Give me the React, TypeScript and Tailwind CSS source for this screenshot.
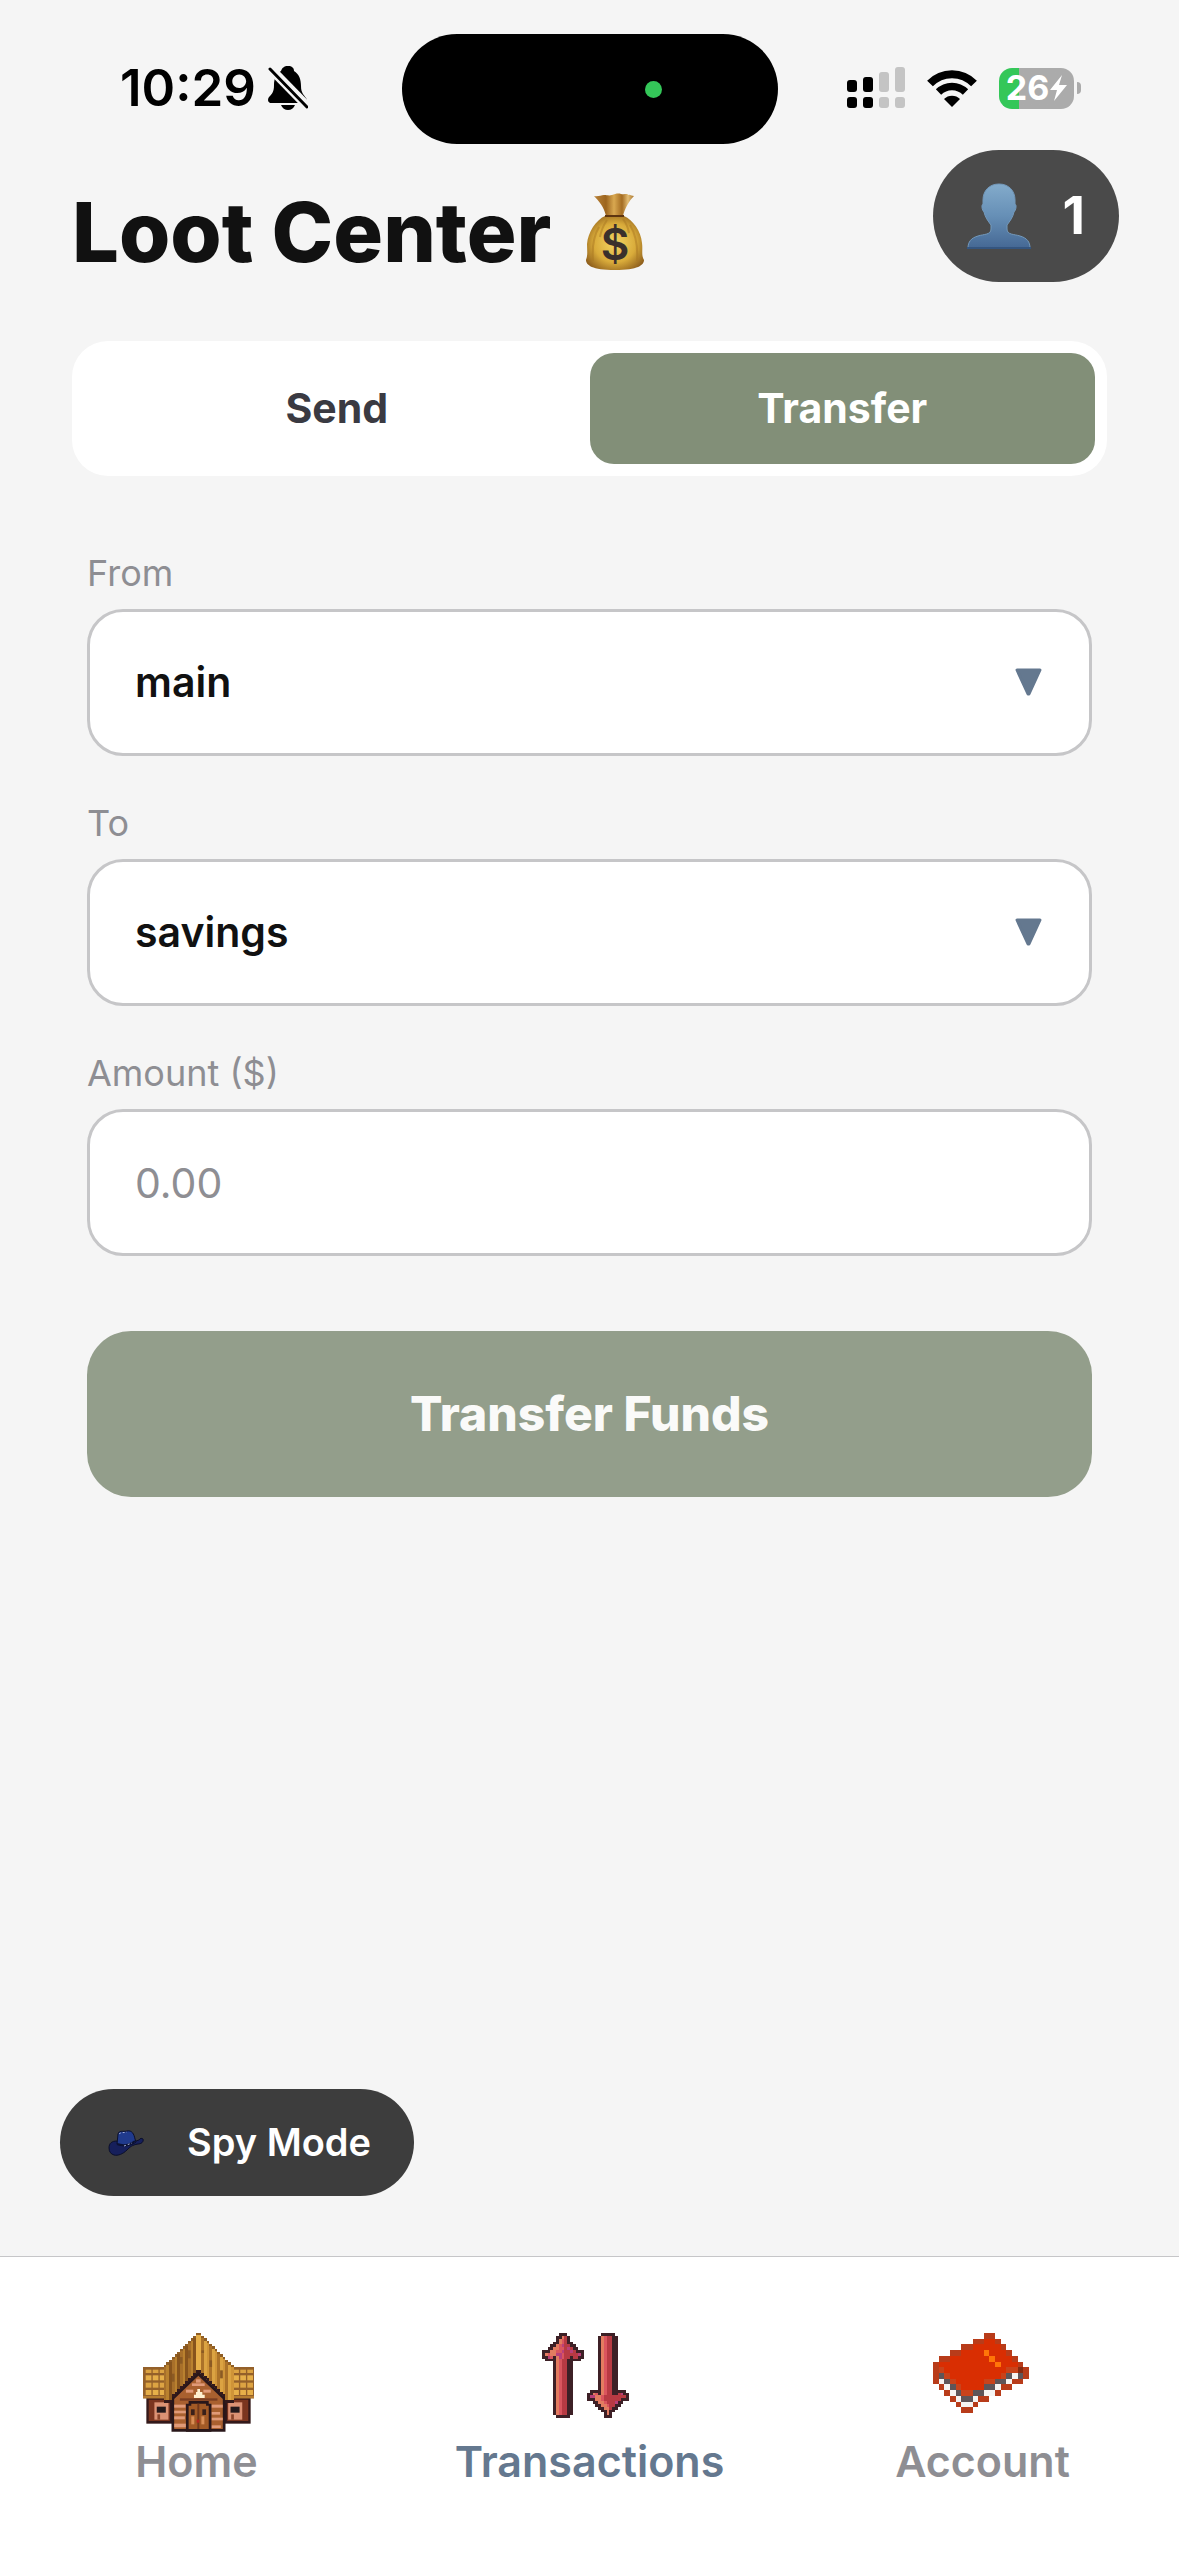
import { useState } from "react";

const BOOK = {
  colors: { d: "#b83c1a", R: "#d92e02", m: "#c9431b", o: "#ff7508", g: "#5f5558", w: "#f6f4f2", k: "#872a10" },
  rows: [
    ".........dd......",
    ".......ddRRd.....",
    ".....ddRRRRRd....",
    "...ddRRRRoRRRd...",
    ".ddRRRRRRRoRRRd..",
    "dRRRRRRRRRRoRRRd.",
    "dmRRRRRRRRRRRmmkd",
    "dgmRRRRRRRRRmgwgd",
    "dwgmRRRRRmmggwdd.",
    ".dwgmRRRRggwdd...",
    "..dwgmmggwwd.....",
    "...dwggwdd.......",
    "....dwwd.........",
    ".....dd..........",
  ],
};

const SHAFT_UP = Array(19).fill("....kocrrkk....");
const SHAFT_DOWN = Array(18).fill("....kocrrkk....");

const ARROW_COLORS = { k: "#3d2026", o: "#e37c60", c: "#da555e", r: "#b83a43", p: "#b9407a" };

const ARROW_UP = {
  colors: ARROW_COLORS,
  rows: [
    "......kkk......",
    ".....kkork.....",
    ".....kocrk.....",
    "....kkocrkk....",
    "...kkocprrkk...",
    "..kkooccrprkk..",
    "kkkooccprrprkkk",
    "kocooppcrrrrrpk",
    "kkpckopcrrkrrkk",
    ".kkkkocrrkkkkk.",
    ...SHAFT_UP,
    ".....kkkkk.....",
  ],
};

const ARROW_DOWN = {
  colors: ARROW_COLORS,
  rows: [
    ".....kkkkk.....",
    ...SHAFT_DOWN,
    "....kocrrkk....",
    ".kkkkocrrkkkkk.",
    "kkockocrrkkrpkk",
    "kppoocrrrrrrrrk",
    "kkkoocrrrrrrkkk",
    "..kkoocrrrpkk..",
    "...kkoocrrkk...",
    "....kkoorkk....",
    ".....kkokk.....",
    "......kok......",
    "......kkk......",
  ],
};

function PixelArt({ art, className }: { art: { colors: any; rows: string[] }; className: string }) {
  return (
    <svg
      className={className}
      viewBox={`0 0 ${art.rows[0].length} ${art.rows.length}`}
      preserveAspectRatio="none"
      shapeRendering="crispEdges"
      aria-hidden="true"
    >
      {art.rows.map((row, y) =>
        row.split("").map((c, x) =>
          c === "." ? null : <rect key={`${x}-${y}`} x={x} y={y} width="1" height="1" fill={art.colors[c]} />
        )
      )}
    </svg>
  );
}

function HouseIcon() {
  // stepped roof, one strip per column of pixels
  const strips = Array.from({ length: 26 }, (_, i) => {
    const x = 132 + i * 8;
    const dist = Math.abs(x + 4 - 236);
    const top = dist < 12 ? 68 : 68 + Math.floor((dist - 4) / 8) * 8;
    const bottom = Math.min(268, 180 + Math.floor((dist * 1.05) / 8) * 8);
    let fill = x < 228 ? ["#a8702a", "#b9812f", "#87541d"][i % 3] : ["#dba342", "#cf9438", "#ab7229"][i % 3];
    if (dist < 10) fill = "#e6ae48";
    return { x, top, bottom, fill };
  });

  return (
    <svg className="h-[99px] w-[111px]" viewBox="70 68 331 297" preserveAspectRatio="none" aria-hidden="true">
      {/* side wings */}
      {[80, 314].map((x) => (
        <g key={x}>
          <rect x={x} y="260" width="77" height="80" fill="#33191a" />
          <rect x={x + 7} y="268" width="63" height="64" fill="#7b351f" />
          <rect x={x + (x < 200 ? 24 : 10)} y="276" width="42" height="52" fill="#dc9274" />
          <rect x={x + (x < 200 ? 31 : 17)} y="289" width="27" height="18" fill="#25191b" />
          <rect x={x + (x < 200 ? 33 : 19)} y="312" width="8" height="16" fill="#8b452a" />
        </g>
      ))}
      {[70, 331].map((x) => (
        <g key={x}>
          <rect x={x} y="170" width="70" height="94" fill="#94602a" />
          {[178, 195, 217, 239].map((y, r) =>
            [8, 29, 50].map((dx) => (
              <rect key={`${dx}-${y}`} x={x + dx} y={y} width="17" height={r === 0 ? 10 : 15} fill={r % 2 ? "#e6af49" : "#dca342"} />
            ))
          )}
          <rect x={x} y="257" width="70" height="7" fill="#b47b31" />
        </g>
      ))}
      {/* front */}
      <path d="M155 364V262L235 182L316 262V364Z" fill="#29171a" />
      <path d="M163 356V266L235 196L308 266V356Z" fill="#a9602f" />
      <g fill="#e09a78">
        <rect x="163" y="283" width="34" height="9" />
        <rect x="163" y="301" width="38" height="8" />
        <rect x="163" y="318" width="32" height="9" />
        <rect x="163" y="340" width="38" height="11" />
        <rect x="274" y="283" width="34" height="9" />
        <rect x="274" y="305" width="26" height="8" />
        <rect x="274" y="322" width="34" height="8" />
        <rect x="274" y="345" width="28" height="8" />
        <rect x="228" y="207" width="14" height="10" />
        <rect x="216" y="219" width="38" height="8" />
        <rect x="198" y="238" width="22" height="9" />
        <rect x="250" y="238" width="22" height="9" />
      </g>
      <rect x="180" y="264" width="112" height="7" fill="#7a3e22" />
      <path d="M232 236h8v9h7v8h7v10h-32v-10h6v-8h4z" fill="#fff0d0" />
      <path d="M198 364V280h8v-8h60v8h8v84z" fill="#29171a" />
      <path d="M206 356V286h8v-6h44v6h8v70z" fill="#a25a26" />
      <rect x="232" y="280" width="6" height="76" fill="#723a1c" />
      <rect x="213" y="297" width="11" height="17" fill="#39201a" />
      <rect x="247" y="297" width="11" height="17" fill="#39201a" />
      <rect x="214" y="318" width="9" height="24" fill="#d88d55" />
      <rect x="244" y="318" width="9" height="24" fill="#d88d55" />
      <rect x="230" y="328" width="8" height="9" fill="#b3261e" />
      {/* roof */}
      {strips.map((s) => (
        <g key={s.x} shapeRendering="crispEdges">
          <rect x={s.x} y={s.top} width="8" height={s.bottom - s.top + 9} fill="#33191a" />
          <rect x={s.x} y={s.top} width="8" height={s.bottom - s.top} fill={s.fill} />
          <rect x={s.x} y={s.top} width="8" height="7" fill="#8f5e26" />
        </g>
      ))}
      <g fill="#8a5a24">
        <rect x="180" y="140" width="8" height="20" />
        <rect x="156" y="190" width="8" height="24" />
        <rect x="204" y="120" width="8" height="24" />
        <rect x="244" y="120" width="8" height="8" />
        <rect x="268" y="150" width="8" height="20" />
        <rect x="300" y="180" width="8" height="24" />
      </g>
    </svg>
  );
}

function MoneyBag() {
  return (
    <svg className="h-[78px] w-[60px]" viewBox="0 0 60 78" aria-hidden="true">
      <defs>
        <radialGradient id="bag" cx="0.5" cy="0.5" r="0.6">
          <stop offset="0" stopColor="#f3d563" />
          <stop offset="0.6" stopColor="#d9ab3a" />
          <stop offset="1" stopColor="#8f5f1c" />
        </radialGradient>
        <linearGradient id="neck" x1="0" x2="1">
          <stop offset="0" stopColor="#b98238" />
          <stop offset="0.3" stopColor="#9c651f" />
          <stop offset="0.5" stopColor="#d9a850" />
          <stop offset="0.7" stopColor="#a46c22" />
          <stop offset="0.85" stopColor="#e3bd74" />
          <stop offset="1" stopColor="#a87530" />
        </linearGradient>
      </defs>
      <path d="M21 23C19 14 14 8 9 3c4 1 7-1 10-1s5 1 8 0 6-2 9-1 7-1 7 1c2-1 4 1 6 1-5 5-9 12-11 20z" fill="url(#neck)" />
      <path d="M20 23h19c9 4 17 15 18 27 1 7-1 12 2 17 0 5-6 10-29 10S1 72 1 67c2-5 1-10 1-16 1-12 9-24 18-28z" fill="url(#bag)" />
      <path d="M14 34C8 44 7 55 8 68M22 27c-4 6-6 11-7 17M45 32c6 10 8 22 7 36M38 26c3 4 5 8 6 14" fill="none" stroke="#a97722" strokeWidth="2" opacity="0.5" />
      <path d="M20 22h19v2H20z" fill="#5e3510" />
      <text x="30" y="67" textAnchor="middle" fill="#3a302c" className="font-['Inter',sans-serif] text-[44px] font-semibold">$</text>
    </svg>
  );
}

function PersonIcon() {
  return (
    <svg className="h-[66px] w-16" viewBox="0 0 64 66" aria-hidden="true">
      <defs>
        <linearGradient id="bust" x1="0" x2="0" y1="0" y2="1">
          <stop offset="0" stopColor="#83abcb" />
          <stop offset="0.5" stopColor="#668fb6" />
          <stop offset="1" stopColor="#456894" />
        </linearGradient>
      </defs>
      <path
        d="M32 1c10 0 16 7 16 16v4c2 1 1 6-1 8-1 5-4 9-7 13v4c0 6 7 5 13 7 7 2 10 6 10 12H1c0-6 3-10 10-12 6-2 13-1 13-7v-4c-3-4-6-8-7-13-2-2-3-7-1-8v-4C16 8 22 1 32 1z"
        fill="url(#bust)"
        stroke="#7399bb"
        strokeWidth="1"
      />
      <path d="M0 65h64" stroke="#34557f" strokeWidth="2" />
    </svg>
  );
}

function HatIcon() {
  return (
    <svg className="h-[26px] w-9" viewBox="0 0 36 26" aria-hidden="true">
      <path d="M1 18c0-5 3-7 8-7l3 4c6 1 12-1 16-4l3-1c1-2 3-2 4-1 1 3-2 5-5 5-6 1-8 3-11 6-4 4-9 6-13 5-3-1-5-3-5-7z" fill="#161f5b" stroke="#0b0f2a" strokeWidth="1" />
      <path d="M9 14l1-10c1-4 5-2 9-3 5-1 7 3 8 8l1 3c-5 4-13 5-19 2z" fill="#203a8c" stroke="#0b0f2a" strokeWidth="1" />
      <path d="M9 14c6 2 13 1 18-3" fill="none" stroke="#0d1233" strokeWidth="2" />
      <path d="M11 4c2-2 5-1 8-2M16 16l8-3" fill="none" stroke="#a9b5dc" strokeWidth="1" strokeDasharray="2 2" />
    </svg>
  );
}

function StatusBar() {
  return (
    <div className="grid h-[150px] grid-cols-[1fr_376px_1fr] items-start pt-[34px] text-black">
      <div className="flex h-[108px] items-center gap-3 pl-[120px]">
        <span className="text-[51px] leading-[60px] font-semibold">10:29</span>
        <svg className="h-[44px] w-10" viewBox="0 0 40 44" aria-hidden="true">
          <path d="M20 0c4 0 6 2 6 5 5 3 7 8 7 15 0 7 3 9 5 12 2 3 1 5-2 5H4c-4 0-5-3-3-6 3-3 5-5 5-12 0-6 2-11 7-14 1-3 3-5 7-5z" />
          <path d="M13 39h14c-1 3-4 5-7 5s-6-2-7-5z" />
          <path d="M0 0L40 41" stroke="#f5f5f5" strokeWidth="9" />
          <path d="M2 3L39 41" stroke="#000" strokeWidth="3" strokeLinecap="round" />
        </svg>
      </div>
      <div className="flex h-[110px] items-center justify-end rounded-full bg-black pr-[116px]">
        <span className="h-[17px] w-[17px] rounded-full bg-[#34c759]" />
      </div>
      <div className="flex h-[108px] items-center justify-end gap-[22px] pr-[98px]">
        <svg className="h-[42px] w-[58px]" viewBox="0 0 58 42" aria-hidden="true">
          <g fill="#000">
            <rect x="0" y="13" width="10" height="12" rx="3" />
            <rect x="16" y="10" width="10" height="15" rx="3" />
            <rect x="0" y="30" width="10" height="11" rx="3" />
            <rect x="16" y="30" width="10" height="11" rx="3" />
          </g>
          <g fill="#c4c4c4">
            <rect x="32" y="5" width="10" height="20" rx="3" />
            <rect x="48" y="0" width="10" height="25" rx="3" />
            <rect x="32" y="30" width="10" height="11" rx="3" />
            <rect x="48" y="30" width="10" height="11" rx="3" />
          </g>
        </svg>
        <svg className="h-[37px] w-[50px]" viewBox="0 0 50 37" aria-hidden="true">
          <path d="M3 13.500C15 1 35 1 47 13.500" fill="none" stroke="#000" strokeWidth="8" />
          <path d="M11.500 22C19 14.500 31 14.500 38.500 22" fill="none" stroke="#000" strokeWidth="7.500" />
          <path d="M25 37l-8-8c4-4.500 12-4.500 16 0z" />
        </svg>
        <div className="flex items-center gap-[3px]">
          <div className="flex h-[41px] w-[75px] items-center justify-center gap-px rounded-[13px] bg-linear-to-r from-[#34c759] from-27% to-[#ababab] to-27% text-white">
            <span className="text-[34px] leading-10 font-bold">26</span>
            <svg className="h-[26px] w-[17px]" viewBox="0 0 17 26" fill="currentColor" aria-hidden="true">
              <path d="M12 0L0 15h7L4 26l13-16H9z" />
            </svg>
          </div>
          <span className="h-3 w-1 rounded-r-full bg-[#ababab]" />
        </div>
      </div>
    </div>
  );
}

function AccountSelect({ id, label, value, onChange }: any) {
  return (
    <div>
      <label htmlFor={id} className="block text-[36px] leading-[42px] text-[#8e8e93]">
        {label}
      </label>
      <div className="relative mt-[15px]">
        <select
          id={id}
          value={value}
          onChange={(e) => onChange(e.target.value)}
          className="block h-[147px] w-full appearance-none rounded-[36px] border-3 border-[#c6c6c8] bg-white px-[45px] text-[41px] font-semibold text-[#111111]"
        >
          <option value="main">main</option>
          <option value="savings">savings</option>
        </select>
        <svg className="pointer-events-none absolute top-[59px] right-[50px] h-7 w-[27px]" viewBox="0 0 27 28" aria-hidden="true">
          <path d="M2 2h23L14 26h-1z" fill="#64788f" stroke="#64788f" strokeWidth="3" strokeLinejoin="round" />
        </svg>
      </div>
    </div>
  );
}

export default function App() {
  const [tab, setTab] = useState("transfer");
  const [from, setFrom] = useState("main");
  const [to, setTo] = useState("savings");
  const [amount, setAmount] = useState("");

  const tabClass = (name: string) =>
    tab === name ? "bg-[#828f78] text-white" : "text-[#3a3a42]";

  return (
    <div className="flex min-h-screen flex-col bg-[#f5f5f5] font-['Inter','Liberation_Sans',sans-serif]">
      <StatusBar />

      {/* header */}
      <header className="flex items-end justify-between pr-[60px] pl-[72px]">
        <h1 className="flex items-center gap-[34px] text-[83px] leading-[100px] font-extrabold text-[#111111]">
          Loot Center
          <MoneyBag />
        </h1>
        <button type="button" className="flex h-[132px] items-center gap-8 rounded-full bg-[#4a4a4a] px-[34px] text-[52px] font-bold text-white">
          <PersonIcon />
          1
        </button>
      </header>

      <main className="flex flex-1 flex-col px-[72px] pt-[59px]">
        <div className="grid grid-cols-2 rounded-[36px] bg-white p-3">
          <button
            type="button"
            onClick={() => setTab("send")}
            className={`h-[111px] rounded-3xl text-[41px] font-bold ${tabClass("send")}`}
          >
            Send
          </button>
          <button
            type="button"
            onClick={() => setTab("transfer")}
            className={`h-[111px] rounded-3xl text-[41px] font-bold ${tabClass("transfer")}`}
          >
            Transfer
          </button>
        </div>

        {/* transfer form */}
        <form className="mt-[76px] flex flex-col gap-[46px] px-[15px]" onSubmit={(e) => e.preventDefault()}>
          <AccountSelect id="from" label="From" value={from} onChange={setFrom} />
          <AccountSelect id="to" label="To" value={to} onChange={setTo} />
          <div>
            <label htmlFor="amount" className="block text-[36px] leading-[42px] text-[#8e8e93]">
              Amount ($)
            </label>
            <input
              id="amount"
              inputMode="decimal"
              placeholder="0.00"
              value={amount}
              onChange={(e) => setAmount(e.target.value)}
              className="mt-[15px] block h-[147px] w-full rounded-[36px] border-3 border-[#c6c6c8] bg-white px-[45px] text-[41px] text-[#111111] placeholder:text-[#8e8e93]"
            />
          </div>
          <button
            type="submit"
            className="mt-[29px] h-[166px] rounded-[44px] bg-[#939e8b] text-[48px] font-extrabold text-[#fafaf9]"
          >
            Transfer Funds
          </button>
        </form>
      </main>

      <button
        type="button"
        className="mb-[60px] ml-[60px] flex h-[107px] items-center gap-[43px] self-start rounded-full bg-[#3d3d3d] pr-[43px] pl-12 text-[38px] font-semibold text-white"
      >
        <HatIcon />
        Spy Mode
      </button>

      {/* bottom tabs */}
      <nav className="grid h-[300px] grid-cols-3 border-t border-[#c6c6c8] bg-white pt-[76px] text-[43px] leading-[52px] font-semibold text-[#8e8e93]">
        <a href="#home" className="flex flex-col items-center">
          <span className="flex h-[102px] items-start pl-1">
            <HouseIcon />
          </span>
          Home
        </a>
        <a href="#transactions" className="flex flex-col items-center text-[#64788f]">
          <span className="flex h-[102px] items-start gap-[3px] pr-2">
            <PixelArt art={ARROW_UP} className="h-[85px] w-[42px]" />
            <PixelArt art={ARROW_DOWN} className="h-[85px] w-[42px]" />
          </span>
          Transactions
        </a>
        <a href="#account" className="flex flex-col items-center">
          <span className="flex h-[102px] items-start pr-1">
            <PixelArt art={BOOK} className="h-20 w-24" />
          </span>
          Account
        </a>
      </nav>
    </div>
  );
}
